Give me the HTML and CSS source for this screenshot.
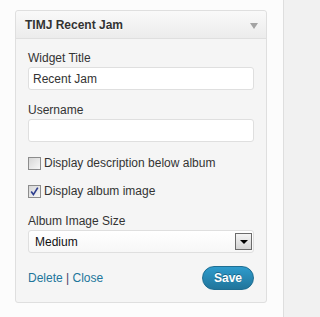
FILE: index.html
```html
<!DOCTYPE html>
<html>
<head>
<meta charset="utf-8">
<link rel="stylesheet" href="styles.css">
</head>
<body>
<div class="page">
  <div class="widget">
    <div class="widget-top">
      <h4 class="widget-title">TIMJ Recent Jam</h4>
      <span class="toggle"></span>
    </div>
    <div class="widget-inside">
      <label class="field-label" for="t">Widget Title</label>
      <input class="text-input" id="t" type="text" value="Recent Jam">
      <label class="field-label second" for="u">Username</label>
      <input class="text-input" id="u" type="text" value="">
      <label class="check-row first-check">
        <span class="box"></span>
        <span>Display description below album</span>
      </label>
      <label class="check-row">
        <span class="box"><svg width="11" height="11" viewBox="0 0 11 11"><path d="M2.2 5.6 L4.4 8.6 L8.8 1.6" fill="none" stroke="#2f3f8f" stroke-width="1.7"/></svg></span>
        <span>Display album image</span>
      </label>
      <div class="field-label third">Album Image Size</div>
      <div class="select">
        <span class="select-value">Medium</span>
        <span class="select-btn"><span class="tri"></span></span>
      </div>
      <div class="footer">
        <div class="links"><a href="#">Delete</a> <span class="sep">|</span> <a href="#">Close</a></div>
        <button class="save">Save</button>
      </div>
    </div>
  </div>
</div>
</body>
</html>
```

FILE: styles.css
```css
html, body {
  margin: 0;
  padding: 0;
  background: #f1f1f1;
}
body {
  font-family: "Liberation Sans", Arial, sans-serif;
  font-size: 12px;
  color: #333;
}
.page {
  width: 284px;
  height: 317px;
  background: #fcfcfc;
  border-right: 1px solid #dedede;
  padding-top: 10px;
  box-sizing: border-box;
}
.widget {
  margin-left: 15px;
  width: 252px;
  border: 1px solid #dfdfdf;
  border-radius: 3px;
  background: #f5f5f5;
  box-sizing: border-box;
}
.widget-top {
  height: 27px;
  border-bottom: 1px solid #dfdfdf;
  background: linear-gradient(to bottom, #f9f9f9, #ececec);
  display: flex;
  align-items: center;
  justify-content: space-between;
  padding: 0 8px 0 9px;
  border-radius: 3px 3px 0 0;
}
.widget-title {
  margin: 0;
  font-size: 12px;
  font-weight: bold;
  color: #333;
  text-shadow: 0 1px 0 #fff;
}
.toggle {
  width: 0;
  height: 0;
  border-left: 4px solid transparent;
  border-right: 4px solid transparent;
  border-top: 6px solid #a3a3a3;
  margin-top: 3px;
}
.widget-inside {
  padding: 11px 12px 12px 12px;
}
.field-label {
  display: block;
  line-height: 16px;
  color: #333;
}
.field-label.second { margin-top: 12px; }
.field-label.third { margin-top: 14px; }
.text-input {
  display: block;
  box-sizing: border-box;
  width: 226px;
  height: 23px;
  margin: 1px 0 0 0;
  padding: 2px 4px;
  border: 1px solid #dfdfdf;
  border-radius: 3px;
  background: #fff;
  font-family: "Liberation Sans", Arial, sans-serif;
  font-size: 12px;
  color: #333;
  outline: none;
}
.check-row {
  display: flex;
  align-items: center;
  height: 16px;
  margin-top: 12px;
  color: #333;
}
.check-row.first-check { margin-top: 13px; }
.box {
  width: 13px;
  height: 13px;
  box-sizing: border-box;
  border: 1px solid #8c8c8c;
  background: linear-gradient(to bottom right, #d6d6d6, #f7f7f7);
  margin-right: 3px;
  display: flex;
  align-items: center;
  justify-content: center;
}
.select {
  margin-top: 1px;
  width: 226px;
  height: 23px;
  box-sizing: border-box;
  border: 1px solid #dfdfdf;
  border-radius: 3px;
  background: linear-gradient(to bottom, #ffffff, #f7f7f7);
  display: flex;
  align-items: center;
  justify-content: space-between;
  padding: 0 1px 0 6px;
}
.select-value {
  color: #111;
}
.select-btn {
  width: 17px;
  height: 17px;
  box-sizing: border-box;
  border: 1px solid #6b6b6b;
  background: linear-gradient(to bottom, #f4f4f4, #d4d4d4);
  display: flex;
  align-items: center;
  justify-content: center;
}
.tri {
  width: 0;
  height: 0;
  border-left: 4px solid transparent;
  border-right: 4px solid transparent;
  border-top: 4px solid #000;
}
.footer {
  margin-top: 13px;
  display: flex;
  align-items: center;
  justify-content: space-between;
  height: 24px;
}
.links a {
  color: #21759b;
  text-decoration: none;
}
.sep {
  color: #4a3f66;
}
.save {
  width: 52px;
  height: 24px;
  border: 1px solid #1f6e92;
  border-radius: 12px;
  background: linear-gradient(to bottom, #2e9bcc, #21759b);
  color: #fff;
  font-family: "Liberation Sans", Arial, sans-serif;
  font-size: 12px;
  font-weight: bold;
  text-shadow: 0 -1px 0 rgba(0,0,0,0.3);
  padding: 0;
}
```
